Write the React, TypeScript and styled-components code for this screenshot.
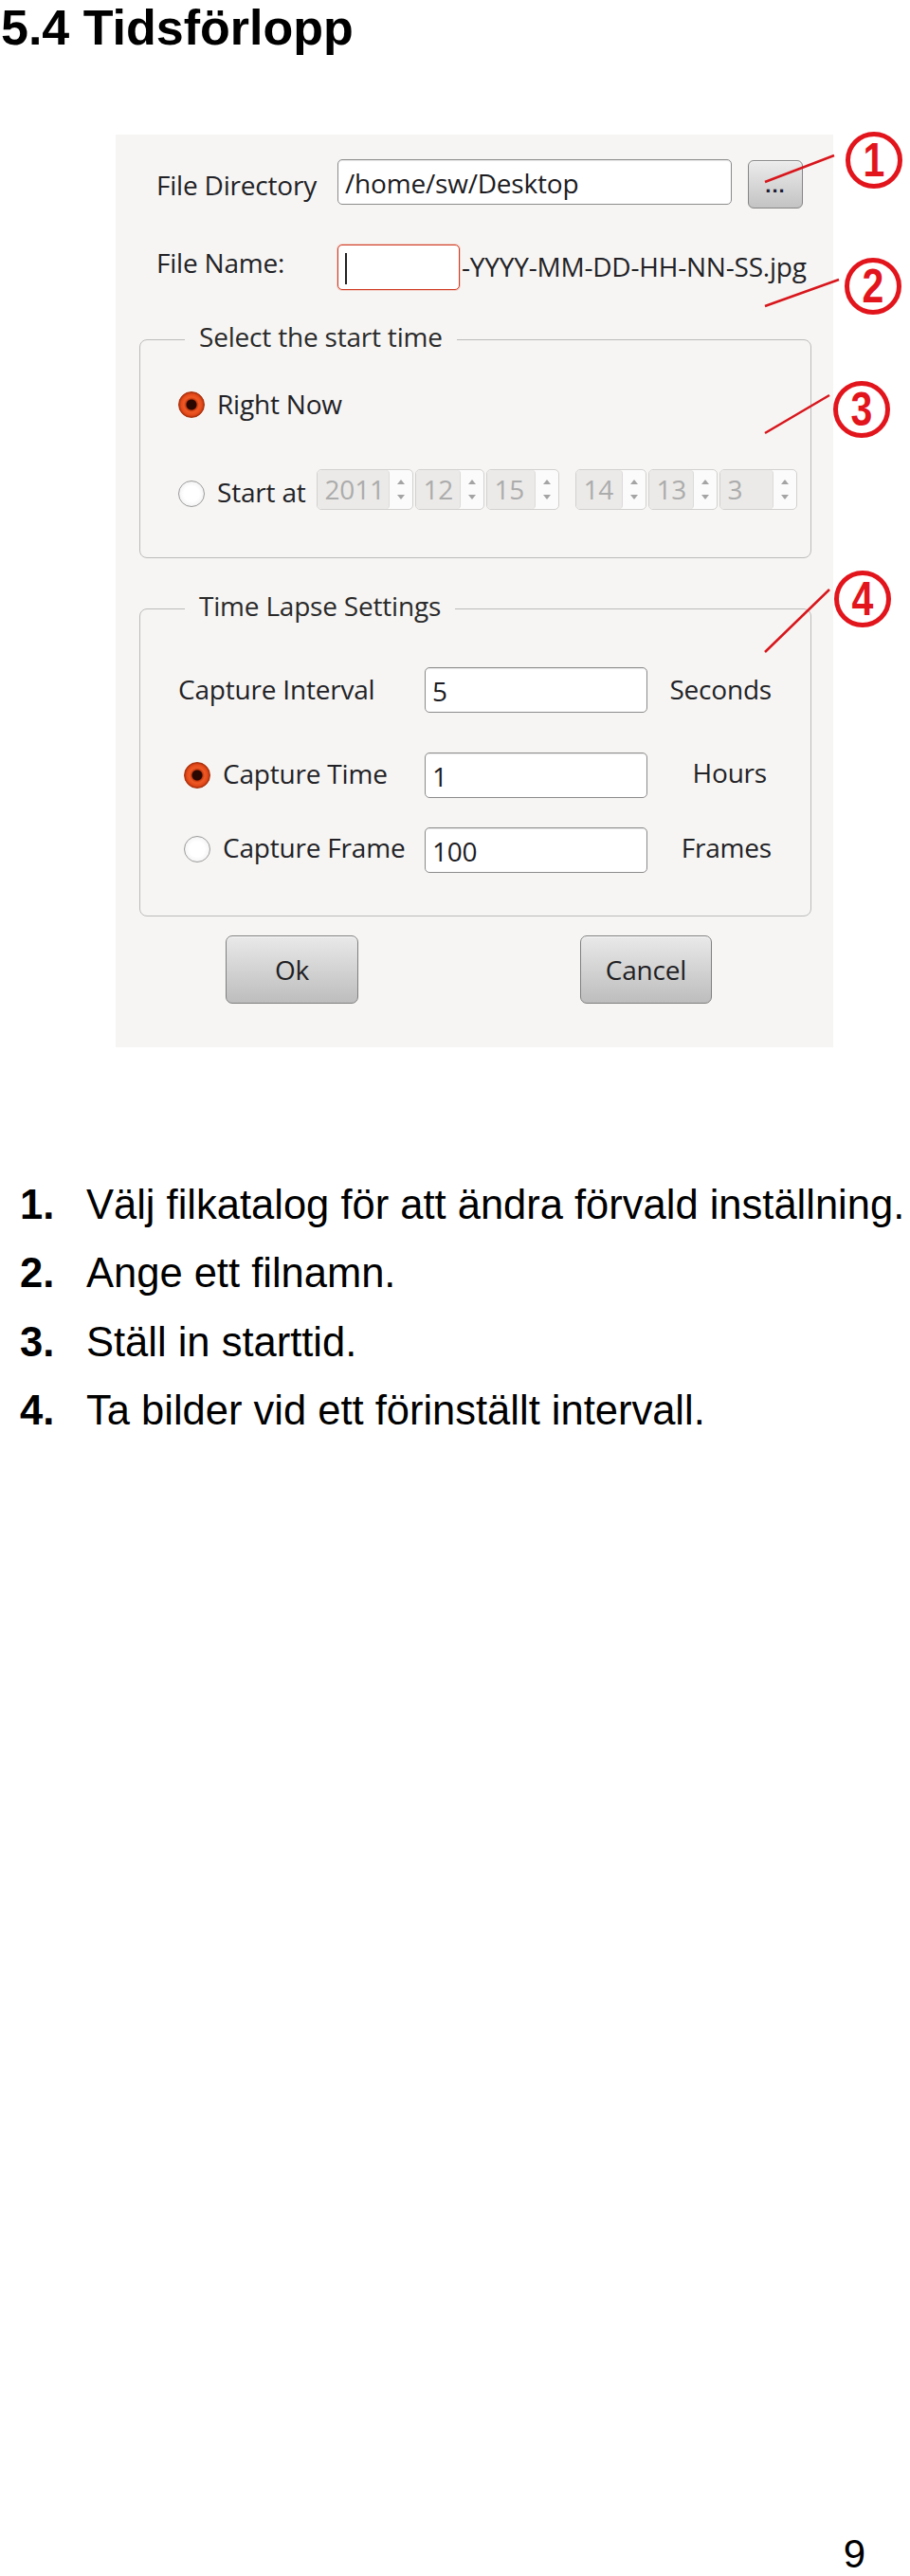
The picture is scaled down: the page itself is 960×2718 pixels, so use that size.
import React from "react";
import styled, { createGlobalStyle } from "styled-components";

const GlobalStyle = createGlobalStyle`
  html, body {
    margin: 0;
    padding: 0;
    background: #ffffff;
  }
  body {
    overflow-x: hidden;
  }
`;

const Page = styled.div`
  width: 960px;
  height: 2718px;
  display: flex;
  flex-direction: column;
  overflow: hidden;
  font-family: "Liberation Sans", Arial, sans-serif;
  color: #000;
`;

const Heading = styled.h1`
  margin: 0;
  padding-left: 1px;
  font-size: 52px;
  line-height: 58px;
  font-weight: 700;
`;

const Figure = styled.div`
  position: relative;
  margin-top: 84px;
`;

const Panel = styled.div`
  margin-left: 122px;
  width: 757px;
  box-sizing: border-box;
  padding: 26px 23px 46px 25px;
  background: #f6f5f3;
  font-family: "Open Sans", "DejaVu Sans", sans-serif;
  font-size: 28px;
  font-weight: 500;
  letter-spacing: -0.2px;
  color: #222226;
`;

const TopRow = styled.div<{ $mt?: number }>`
  display: flex;
  align-items: flex-start;
  padding-left: 18px;
  margin-top: ${(p) => p.$mt ?? 0}px;
`;

const Label = styled.div<{ $mt?: number; $w?: number; $ml?: number }>`
  flex: none;
  width: ${(p) => (p.$w ? `${p.$w}px` : "auto")};
  line-height: 32px;
  margin-top: ${(p) => p.$mt ?? 0}px;
  margin-left: ${(p) => p.$ml ?? 0}px;
  white-space: nowrap;
`;

const Field = styled.div<{ $w: number; $error?: boolean }>`
  flex: none;
  width: ${(p) => p.$w}px;
  height: 48px;
  box-sizing: border-box;
  display: flex;
  align-items: center;
  padding: 2px 7px 0;
  background: #ffffff;
  border: 1.5px solid ${(p) => (p.$error ? "#cf3a22" : "#8c8c8c")};
  border-radius: 5px;
  box-shadow: ${(p) =>
    p.$error ? "0 0 0 1px rgba(230, 100, 70, 0.25)" : "inset 0 1px 1px rgba(0,0,0,0.08)"};
  line-height: 45px;
  color: #1c1c22;
`;

const Caret = styled.span`
  width: 2px;
  height: 33px;
  background: #222;
`;

const BrowseButton = styled.div`
  flex: none;
  width: 58px;
  height: 51px;
  box-sizing: border-box;
  margin: 1px 0 0 17px;
  border: 1.5px solid #858585;
  border-radius: 6px;
  background: linear-gradient(#ececec, #c3c3c3);
  box-shadow: inset 0 1px 0 rgba(255, 255, 255, 0.7);
  display: flex;
  justify-content: center;
  align-items: flex-end;
  padding-bottom: 12px;
  font-family: "Liberation Sans", Arial, sans-serif;
  font-weight: 700;
  font-size: 22px;
  line-height: 1;
  letter-spacing: 1px;
  color: #1b1b33;
`;

const Group = styled.fieldset<{ $mt: number; $pb: number }>`
  margin: ${(p) => p.$mt}px 0 0;
  padding: 0 0 ${(p) => p.$pb}px 40px;
  min-width: 0;
  border: 1px solid #bbbbb9;
  border-radius: 8px;
`;

const Legend = styled.legend`
  margin-left: 7px;
  padding: 0 15px 6px;
  font-size: 28px;
  line-height: 32px;
  color: #2a2a2a;
`;

const OptionRow = styled.div<{ $mt: number }>`
  display: flex;
  align-items: flex-start;
  margin-top: ${(p) => p.$mt}px;
`;

const Radio = styled.span<{ $checked?: boolean; $mt: number }>`
  flex: none;
  width: 28px;
  height: 28px;
  box-sizing: border-box;
  margin-top: ${(p) => p.$mt}px;
  border-radius: 50%;
  border: 1.5px solid ${(p) => (p.$checked ? "#a8300c" : "#9b9b9b")};
  background: ${(p) =>
    p.$checked
      ? "radial-gradient(circle, #2a0700 0 5px, #c7390f 6px, #ee5a26 8px, #e44a1a 11px, #b8340d 13px)"
      : "radial-gradient(circle, #ffffff 0 8px, #f4f4f4 13px)"};
`;

const OptionText = styled.span<{ $mt: number }>`
  margin: ${(p) => p.$mt}px 0 0 13px;
  line-height: 32px;
  white-space: nowrap;
`;

const LabelCol = styled.div<{ $pl?: number }>`
  flex: none;
  width: 260px;
  box-sizing: border-box;
  padding-left: ${(p) => p.$pl ?? 0}px;
  display: flex;
  align-items: flex-start;
`;

const Unit = styled.div<{ $mt: number; $pr?: number }>`
  flex: none;
  width: 131px;
  box-sizing: border-box;
  padding-right: ${(p) => p.$pr ?? 0}px;
  text-align: right;
  line-height: 32px;
  margin-top: ${(p) => p.$mt}px;
`;

const SpinGroup = styled.div<{ $ml: number }>`
  display: flex;
  gap: 2px;
  margin-left: ${(p) => p.$ml}px;
`;

const SpinBox = styled.div<{ $w: number }>`
  display: flex;
  width: ${(p) => p.$w}px;
  height: 43px;
  box-sizing: border-box;
  border: 1px solid #d2d1cf;
  border-radius: 5px;
  overflow: hidden;
  background: #fbfbfb;
`;

const SpinValue = styled.div`
  flex: 1;
  padding-left: 8px;
  background: #ebeae8;
  border-right: 1px solid #dcdbd9;
  border-radius: 0 4px 4px 0;
  line-height: 41px;
  color: #acacac;
`;

const SpinArrows = styled.div`
  flex: none;
  width: 24px;
  display: flex;
  flex-direction: column;
  align-items: center;
  justify-content: center;
  gap: 11px;
`;

const Arrow = styled.span<{ $down?: boolean }>`
  width: 0;
  height: 0;
  border-left: 4px solid transparent;
  border-right: 4px solid transparent;
  ${(p) =>
    p.$down ? "border-top: 5px solid #a4a4a4;" : "border-bottom: 5px solid #a4a4a4;"}
`;

const ButtonRow = styled.div`
  display: flex;
  gap: 234px;
  margin-top: 20px;
  padding-left: 91px;
`;

const PushButton = styled.div<{ $w: number }>`
  width: ${(p) => p.$w}px;
  height: 72px;
  box-sizing: border-box;
  border: 1.5px solid #7f7f7f;
  border-radius: 7px;
  background: linear-gradient(#e9e9e9, #bdbdbd);
  box-shadow: inset 0 1px 0 rgba(255, 255, 255, 0.75);
  display: flex;
  align-items: center;
  justify-content: center;
  color: #1f1f24;
`;

const Leaders = styled.svg`
  position: absolute;
  top: 0;
  left: 0;
  pointer-events: none;
`;

const Mark = styled.span<{ $x: number; $y: number }>`
  position: absolute;
  left: ${(p) => p.$x - 30}px;
  top: ${(p) => p.$y - 30}px;
  width: 60px;
  height: 60px;
  box-sizing: border-box;
  border: 5.5px solid #e2141c;
  border-radius: 50%;
  display: flex;
  align-items: center;
  justify-content: center;
  font-family: "Liberation Sans", Arial, sans-serif;
  font-weight: 700;
  font-size: 50px;
  line-height: 1;
  color: #e2141c;
`;

const MarkDigit = styled.span`
  display: inline-block;
  transform: scaleX(0.82);
`;

const Steps = styled.ol`
  list-style: none;
  margin: 130px 0 0;
  padding: 0 0 0 21px;
  font-size: 43.5px;
  line-height: 72.3px;
`;

const Step = styled.li`
  display: grid;
  grid-template-columns: 70px auto;
  white-space: nowrap;
`;

const StepNum = styled.span`
  font-weight: 700;
`;

const PageNumber = styled.div`
  margin-top: auto;
  padding-right: 47px;
  text-align: right;
  font-size: 42px;
  line-height: 47px;
`;

const spins = [
  { value: "2011", w: 102 },
  { value: "12", w: 73 },
  { value: "15", w: 77 },
];
const timeSpins = [
  { value: "14", w: 75 },
  { value: "13", w: 73 },
  { value: "3", w: 82 },
];

const marks = [
  { n: "1", x: 922, y: 27, line: [880, 22, 807, 50] },
  { n: "2", x: 921, y: 160, line: [885, 153, 807, 181] },
  { n: "3", x: 909, y: 290, line: [875, 275, 807, 315] },
  { n: "4", x: 910, y: 490, line: [875, 480, 807, 546] },
];

const steps = [
  "Välj filkatalog för att ändra förvald inställning.",
  "Ange ett filnamn.",
  "Ställ in starttid.",
  "Ta bilder vid ett förinställt intervall.",
];

const Spin = ({ value, w }: { value: string; w: number }) => (
  <SpinBox $w={w}>
    <SpinValue>{value}</SpinValue>
    <SpinArrows>
      <Arrow />
      <Arrow $down />
    </SpinArrows>
  </SpinBox>
);

const App = () => {
  return (
    <Page>
      <GlobalStyle />
      <Heading>5.4 Tidsförlopp</Heading>

      <Figure>
        <Panel>
          <TopRow>
            <Label $w={191} $mt={11}>
              File Directory
            </Label>
            <Field $w={416}>/home/sw/Desktop</Field>
            <BrowseButton>...</BrowseButton>
          </TopRow>
          <TopRow $mt={38}>
            <Label $w={191} $mt={3}>
              File Name:
            </Label>
            <Field $w={129} $error>
              <Caret />
            </Field>
            <Label $mt={7} $ml={2}>
              -YYYY-MM-DD-HH-NN-SS.jpg
            </Label>
          </TopRow>

          <Group $mt={33} $pb={50}>
            <Legend>Select the start time</Legend>
            <OptionRow $mt={33}>
              <Radio $checked $mt={3} />
              <OptionText $mt={0}>Right Now</OptionText>
            </OptionRow>
            <OptionRow $mt={53}>
              <Radio $mt={12} />
              <OptionText $mt={8}>Start at</OptionText>
              <SpinGroup $ml={11}>
                {spins.map((s) => (
                  <Spin key={s.value} {...s} />
                ))}
              </SpinGroup>
              <SpinGroup $ml={17}>
                {timeSpins.map((s) => (
                  <Spin key={s.value} {...s} />
                ))}
              </SpinGroup>
            </OptionRow>
          </Group>

          <Group $mt={34} $pb={45}>
            <Legend>Time Lapse Settings</Legend>
            <OptionRow $mt={43}>
              <LabelCol>
                <Label $mt={7}>Capture Interval</Label>
              </LabelCol>
              <Field $w={235}>5</Field>
              <Unit $mt={7}>Seconds</Unit>
            </OptionRow>
            <OptionRow $mt={42}>
              <LabelCol $pl={6}>
                <Radio $checked $mt={10} />
                <OptionText $mt={6}>Capture Time</OptionText>
              </LabelCol>
              <Field $w={235}>1</Field>
              <Unit $mt={5} $pr={5}>
                Hours
              </Unit>
            </OptionRow>
            <OptionRow $mt={31}>
              <LabelCol $pl={6}>
                <Radio $mt={9} />
                <OptionText $mt={5}>Capture Frame</OptionText>
              </LabelCol>
              <Field $w={235}>100</Field>
              <Unit $mt={5}>Frames</Unit>
            </OptionRow>
          </Group>

          <ButtonRow>
            <PushButton $w={140}>Ok</PushButton>
            <PushButton $w={139}>Cancel</PushButton>
          </ButtonRow>
        </Panel>

        <Leaders width={960} height={600}>
          {marks.map((m) => (
            <line
              key={m.n}
              x1={m.line[0]}
              y1={m.line[1]}
              x2={m.line[2]}
              y2={m.line[3]}
              stroke="#d8161c"
              strokeWidth={2.5}
            />
          ))}
        </Leaders>
        {marks.map((m) => (
          <Mark key={m.n} $x={m.x} $y={m.y}>
            <MarkDigit>{m.n}</MarkDigit>
          </Mark>
        ))}
      </Figure>

      <Steps>
        {steps.map((s, i) => (
          <Step key={s}>
            <StepNum>{i + 1}.</StepNum>
            <span>{s}</span>
          </Step>
        ))}
      </Steps>

      <PageNumber>9</PageNumber>
    </Page>
  );
};

export default App;
